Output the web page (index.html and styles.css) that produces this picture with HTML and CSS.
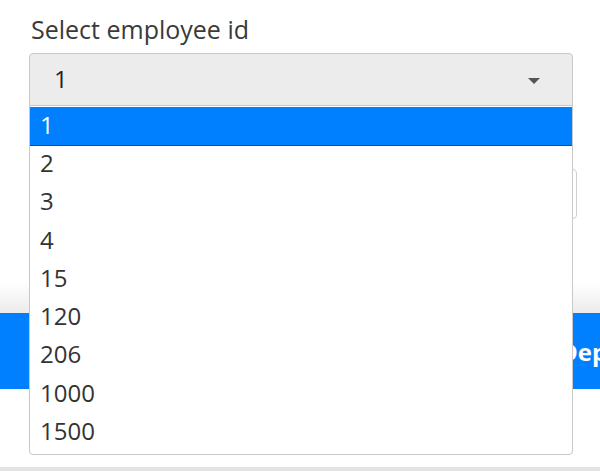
FILE: index.html
```html
<!DOCTYPE html>
<html>
<head>
<meta charset="utf-8">
<link rel="stylesheet" href="styles.css">
</head>
<body>
<div class="page">
  <div class="form">
    <div class="label">Select employee id</div>
    <div class="select">
      <span class="value">1</span>
      <span class="caret"></span>
    </div>
    <div class="input"></div>
  </div>
  <div class="fade"></div>
  <div class="button"><span>Department</span></div>
  <div class="spacer"></div>
  <div class="bottom"></div>

  <ul class="dropdown">
    <li class="opt active">1</li>
    <li class="opt">2</li>
    <li class="opt">3</li>
    <li class="opt">4</li>
    <li class="opt">15</li>
    <li class="opt">120</li>
    <li class="opt">206</li>
    <li class="opt">1000</li>
    <li class="opt">1500</li>
  </ul>
</div>
</body>
</html>
```

FILE: styles.css
```css
html, body {
  margin: 0;
  padding: 0;
  background: #fff;
}
body {
  font-family: "Open Sans", "Liberation Sans", sans-serif;
  color: #333;
  width: 600px;
  height: 471px;
  overflow: hidden;
}
.page {
  position: relative;
  height: 471px;
  display: flex;
  flex-direction: column;
}
.form {
  padding: 0 23px 0 29px;
  display: flex;
  flex-direction: column;
}
.label {
  font-size: 25px;
  line-height: 30px;
  margin-top: 14px;
  margin-left: 2px;
  height: 39px;
  color: #3a3a3a;
}
.select {
  width: 542px;
  height: 51px;
  border: 1px solid #c8c8c8;
  border-radius: 4px 4px 0 0;
  background: #ececec;
  display: flex;
  align-items: center;
  justify-content: space-between;
  box-sizing: content-box;
}
.value {
  font-size: 24px;
  color: #222;
  margin-left: 24px;
  margin-top: -2px;
}
.caret {
  width: 0;
  height: 0;
  border-left: 6px solid transparent;
  border-right: 6px solid transparent;
  border-top: 6px solid #555;
  margin-right: 32px;
  margin-top: 2px;
}
.input {
  margin-top: 63px;
  width: 546px;
  height: 48px;
  border: 1px solid #d0d0d0;
  border-radius: 4px;
}
.fade {
  margin-top: 64px;
  height: 30px;
  background: linear-gradient(#ffffff, #ebebeb);
}
.button {
  height: 76px;
  background: #0080ff;
  color: #fff;
  font-weight: 700;
  font-size: 24px;
  display: flex;
  align-items: center;
  padding-left: 560px;
  white-space: nowrap;
  overflow: hidden;
}
.spacer {
  flex: 1;
}
.bottom {
  height: 4px;
  background: #e3e3e3;
}
.dropdown {
  position: absolute;
  top: 105px;
  left: 29px;
  width: 542px;
  margin: 0;
  padding: 0;
  list-style: none;
  background: #fff;
  border: 1px solid #c8c8c8;
  border-radius: 0 0 4px 4px;
  height: 348px;
}
.opt {
  height: 38.3px;
  line-height: 33.5px;
  font-size: 24px;
  padding-left: 10px;
  color: #333;
  box-sizing: border-box;
}
.opt.active {
  background: #0080ff;
  color: #fff;
  height: 39px;
  line-height: 35px;
  margin-top: 1px;
  border-bottom: 1px solid #0044ff;
}
```
